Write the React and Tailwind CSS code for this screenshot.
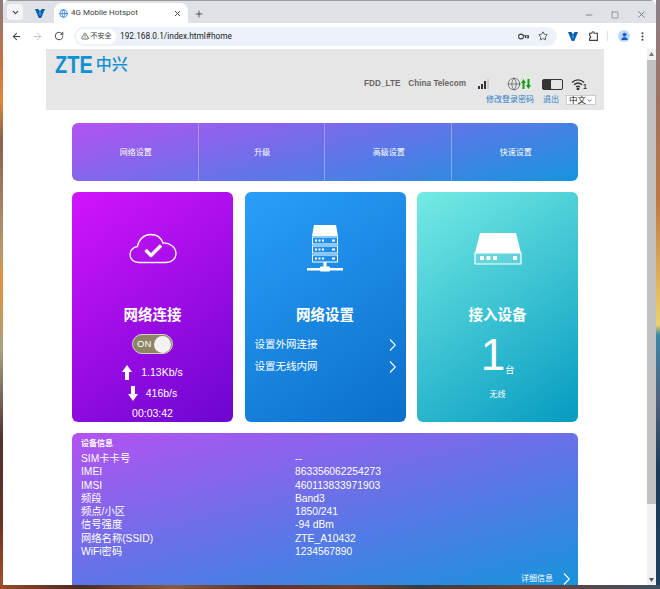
import {
  ArrowLeft,
  ArrowRight,
  ChevronDown,
  EllipsisVertical,
  Globe,
  Minus,
  Plus,
  RotateCw,
  Square,
  Star,
  TriangleAlert,
  User,
  X,
} from "lucide-react";

const sans = "font-['Liberation_Sans','Noto_Sans_CJK_SC',sans-serif]";

const VLogo = () => (
  <svg width="10" height="9" viewBox="0 0 10 9">
    <path d="M0 0h3.400L5 2.500 6.600 0H10L6.200 9H3.800z" fill="#0b5cad" />
    <path d="M3.800 4 5 2.500 6.200 4 5 7.500z" fill="#2aa3e8" />
  </svg>
);

const KeyIcon = () => (
  <svg width="11" height="7" viewBox="0 0 11 7" fill="none" stroke="#3c4043" strokeWidth="1.100">
    <circle cx="3" cy="3.500" r="2.400" />
    <path d="M5.400 2.800h5.100v2H9.200V3.800M7.500 3v2" />
  </svg>
);

const PuzzleIcon = () => (
  <svg width="9" height="10" viewBox="0 0 9 10" fill="none" stroke="#3c4043" strokeWidth="1.100">
    <path d="M.6 2.200h2.200c0-2 2.400-2 2.400 0h3.200v7.200H.6V7c1.600 0 1.600-2.200 0-2.200z" />
  </svg>
);

const CloudCheck = () => (
  <svg width="48" height="31" viewBox="0 0 48 31" fill="none">
    <path
      d="M10 29.500C4.500 29.500 1 26 1 21.500 1 17.500 4 14 8.500 13.500 9.500 7 14.500 1.500 22 1.500c5.500 0 10 3 12 8.500 6.500-.5 13 4.500 13 10.500 0 5.500-4.500 9-10 9z"
      stroke="#fff"
      strokeWidth="1.300"
    />
    <path d="M16.500 17l5.500 5.500 10-10" stroke="#fff" strokeWidth="3.400" strokeLinejoin="round" />
  </svg>
);

const ServerIcon = () => (
  <svg width="36" height="48" viewBox="0 0 36 48" fill="none">
    <path d="M7 0h22l2 11H5z" fill="#fff" />
    {[11, 20, 29].map((y) => (
      <g key={y}>
        <rect x="5.500" y={y + 1} width="25" height="7" stroke="#fff" strokeWidth="1" />
        <rect x="8" y={y + 3.500} width="2" height="2" fill="#fff" />
        <rect x="11.500" y={y + 3.500} width="2" height="2" fill="#fff" />
        <rect x="15" y={y + 3.500} width="2" height="2" fill="#fff" />
        <rect x="25" y={y + 3.500} width="3" height="2" fill="#fff" />
      </g>
    ))}
    <rect x="16.500" y="37" width="3" height="8" fill="#fff" />
    <rect x="0" y="43" width="36" height="2.500" fill="#fff" />
    <rect x="13" y="41.500" width="10" height="5" rx="1" fill="#fff" />
  </svg>
);

const RouterIcon = () => (
  <svg width="48" height="33" viewBox="0 0 48 33" fill="none">
    <path d="M6 1h36l5 20H1z" fill="#fff" />
    <path d="M1 21h46v11H1z" fill="#fff" fillOpacity="0.12" stroke="#fff" strokeWidth="1.200" />
    <rect x="6" y="24" width="4" height="4" fill="#fff" />
    <rect x="12.500" y="24" width="4" height="4" fill="#fff" />
    <rect x="19" y="24" width="4" height="4" fill="#fff" />
    <rect x="39" y="24" width="4" height="4" fill="#fff" />
  </svg>
);

const ThinArrow = () => (
  <svg width="7" height="12" viewBox="0 0 7 12" fill="none" stroke="#fff" strokeWidth="1.100">
    <path d="M1 .5 6.300 6 1 11.500" />
  </svg>
);

const FatArrow = ({ down }) => (
  <svg width="10" height="15" viewBox="0 0 10 15" className={down ? "rotate-180" : ""}>
    <path d="M5 0l5 7H7v8H3V7H0z" fill="#fff" />
  </svg>
);

const menu = ["网络设置", "升级", "高级设置", "快速设置"];

const info = [
  ["SIM卡卡号", "--"],
  ["IMEI", "863356062254273"],
  ["IMSI", "460113833971903"],
  ["频段", "Band3"],
  ["频点/小区", "1850/241"],
  ["信号强度", "-94 dBm"],
  ["网络名称(SSID)", "ZTE_A10432"],
  ["WiFi密码", "1234567890"],
];

const Browser = () => (
  <div className="shrink-0 font-['Roboto','Noto_Sans_CJK_SC',sans-serif] text-[#3c4043]">
    <div className="flex h-[23px] items-end border-t border-[#9a9a9a] bg-[#dee1e6] pl-1">
      <div className="mb-[3px] flex h-4 w-4 items-center justify-center rounded bg-[#f4f5f7]">
        <ChevronDown size={9} strokeWidth={3} />
      </div>
      <div className="mb-[5px] ml-[10px] flex w-[14px] justify-center">
        <VLogo />
      </div>
      <div className="ml-[7px] flex h-5 w-[134px] items-center rounded-t-lg bg-white pl-[5px] pr-[6px]">
        <Globe size={9} className="text-[#1a73e8]" />
        <span className="ml-[3px] flex-1 text-[8px]">4G Mobile Hotspot</span>
        <X size={9} strokeWidth={2.500} />
      </div>
      <Plus size={10} className="mb-1 ml-[6px]" />
      <div className="mb-[3px] ml-auto flex items-center gap-[17px] pr-[9px] text-[#70757a]">
        <Minus size={10} />
        <Square size={8} />
        <X size={11} />
      </div>
    </div>
    <div className="flex h-[26px] items-center bg-white pl-[8px] pr-[8px]">
      <ArrowLeft size={11} strokeWidth={2.200} />
      <ArrowRight size={11} strokeWidth={1.600} className="ml-[10px] text-[#a9acb0]" />
      <RotateCw size={10} strokeWidth={2.200} className="ml-[11px]" />
      <div className="ml-[10px] flex h-[19px] w-[483px] items-center rounded-full bg-[#edf2fa] pl-[2px] pr-[9px]">
        <div className="flex h-[15px] w-[40px] items-center justify-center gap-[2px] rounded-full bg-white text-[7px]">
          <TriangleAlert size={8} strokeWidth={2.200} />
          不安全
        </div>
        <span className="ml-[4px] flex-1 text-[8.300px] text-[#202124]">192.168.0.1/index.html#home</span>
        <KeyIcon />
        <Star size={10} strokeWidth={2} className="ml-[9px]" />
      </div>
      <div className="ml-[10px] flex w-[12px] justify-center">
        <VLogo />
      </div>
      <div className="ml-[9px] flex w-[10px] justify-center">
        <PuzzleIcon />
      </div>
      <div className="ml-[9px] h-[10px] w-px bg-[#d3e3fd]" />
      <div className="ml-[10px] flex h-[12px] w-[12px] items-center justify-center rounded-full bg-[#c2d7f7]">
        <User size={9} fill="#0b57d0" className="text-[#0b57d0]" />
      </div>
      <EllipsisVertical size={11} strokeWidth={2.500} className="ml-[7px]" />
    </div>
  </div>
);

const Header = () => (
  <div className={`ml-[43px] flex h-[61px] w-[558px] justify-between bg-[#e6e6e6] pl-[9px] pr-[8px] ${sans}`}>
    <div className="mt-[3px] flex h-[26px] items-center text-[20px] leading-none font-semibold text-[#0f90d2]">
      <span className="inline-block scale-y-[1.2]">ZTE</span>
      <span className="ml-[3px] text-[16px] font-medium">中兴</span>
    </div>
    <div className="flex flex-col items-end justify-end pb-[4px]">
      <div className="mb-[3px] flex h-[14px] items-center">
        <span className="text-[8.200px] font-bold text-[#666]">FDD_LTE</span>
        <span className="ml-2 text-[8.200px] font-bold text-[#666]">China Telecom</span>
        <div className="ml-[12px] flex items-end gap-[1px]">
          <div className="h-[3px] w-[2px] bg-[#333]" />
          <div className="h-[5px] w-[2px] bg-[#333]" />
          <div className="h-[8px] w-[2px] bg-[#333]" />
          <div className="h-[10px] w-[2px] bg-[#ccc]" />
        </div>
        <Globe size={14} strokeWidth={1.200} className="ml-[18px] text-[#555]" />
        <svg width="10" height="10" viewBox="0 0 10 10">
          <path d="M2.500 0l2.500 4H3.500v6h-2V4H0zM7.500 10L5 6h1.500V0h2v6H10z" fill="#12a012" />
        </svg>
        <div className="ml-[11px] flex h-[11px] w-[21px] rounded-[2px] border border-[#333] bg-[#333]">
          <div className="ml-auto h-full w-[11px] rounded-[1px] bg-[#e6e6e6]" />
        </div>
        <div className="relative ml-[8px] w-[16px]">
          <svg width="14" height="12" viewBox="0 0 14 12" fill="none" stroke="#333" strokeWidth="1.300">
            <path d="M1 4.500C4.500 1 9.500 1 13 4.500M3 6.800c2.500-2.200 5.500-2.200 8 0M5 9c1.200-1 2.800-1 4 0" />
            <circle cx="7" cy="11" r="0.800" fill="#333" />
          </svg>
          <span className="absolute right-0 bottom-[-2px] text-[7px] font-bold text-[#333]">1</span>
        </div>
        <div className="w-[9px]" />
      </div>
      <div className="flex h-[12px] items-center text-[8px] text-[#2f80c8]">
        <span>修改登录密码</span>
        <span className="ml-[9px]">退出</span>
        <div className="ml-[7px] flex h-[10px] w-[30px] items-center justify-between border border-[#ccc] bg-white px-[2px] text-[8.500px] text-[#222]">
          中文
          <ChevronDown size={7} strokeWidth={2} />
        </div>
      </div>
    </div>
  </div>
);

const Card = ({ gradient, icon, title, children }) => (
  <div className={`flex h-[230px] w-[161px] flex-col items-center rounded-md text-white ${gradient}`}>
    <div className="flex h-[113px] items-center">{icon}</div>
    <div className="text-[14.500px] leading-5 font-bold">{title}</div>
    {children}
  </div>
);

const App = () => (
  <div className="h-[589px] w-[660px] overflow-hidden">
    <div className="flex h-[585px]">
      <div className="w-[3px] bg-[linear-gradient(180deg,#8a7a80_0,#c87040_60px,#e08838_100px,#8a6050_140px,#b89870_250px,#e09040_280px,#a8a080_350px,#503030_440px,#6a3020_520px,#a05030_585px)]" />
      <div className="flex w-[653px] flex-col overflow-hidden rounded-t-md rounded-b-sm bg-white">
        <Browser />
        <div className={`flex min-h-0 flex-1 ${sans}`}>
          <div className="w-[644px] min-w-0">
            <Header />
            <div className="mt-[13px] ml-[69px] grid h-[58px] w-[506px] grid-cols-4 rounded-md bg-[linear-gradient(165deg,#b452f2,#1695de)] text-[8px] text-white">
              {menu.map((m, i) => (
                <div key={m} className={`flex items-center justify-center pt-[1px] pl-[2px] ${i < 3 ? "border-r border-white/30" : ""}`}>
                  {m}
                </div>
              ))}
            </div>
            <div className="mt-[11px] ml-[69px] flex w-[506px] justify-between">
              <Card
                gradient="bg-[linear-gradient(145deg,#d214fd,#6b06cf)]"
                icon={<CloudCheck />}
                title="网络连接"
              >
                <div className="mt-[9px] flex h-5 w-[41px] items-center justify-between rounded-full border border-[#d8d0c0] bg-[#8c8465] pl-[4px] pr-[1px] text-[9.500px]">
                  ON
                  <div className="h-[17px] w-[17px] rounded-full bg-[#f2f2f2]" />
                </div>
                <div className="mt-[11px] flex h-[15px] items-center gap-[9px] text-[10.500px]">
                  <FatArrow />
                  1.13Kb/s
                </div>
                <div className="mt-[6px] flex h-[15px] items-center gap-[8px] text-[10.500px]">
                  <FatArrow down />
                  416b/s
                </div>
                <div className="mt-[5px] text-[10.500px] leading-[15px]">00:03:42</div>
              </Card>
              <Card
                gradient="bg-[linear-gradient(145deg,#2a9ff8,#0a6fcb)]"
                icon={<ServerIcon />}
                title="网络设置"
              >
                <div className="mt-[9px] flex h-[22px] w-full items-center justify-between pl-[10px] pr-[10px] text-[10.500px]">
                  设置外网连接
                  <ThinArrow />
                </div>
                <div className="flex h-[22px] w-full items-center justify-between pl-[10px] pr-[10px] text-[10.500px]">
                  设置无线内网
                  <ThinArrow />
                </div>
              </Card>
              <Card
                gradient="bg-[linear-gradient(145deg,#74ebe4,#069bc1)]"
                icon={<RouterIcon />}
                title="接入设备"
              >
                <div className="mt-[6px] flex h-[48px] items-end">
                  <span className="text-[44px] leading-[48px]">1</span>
                  <span className="mb-[2px] text-[9px]">台</span>
                </div>
                <div className="mt-[10px] text-[8px]">无线</div>
              </Card>
            </div>
            <div className="mt-[11px] ml-[69px] flex h-[160px] w-[506px] flex-col rounded-md bg-[linear-gradient(165deg,#b452f2,#1295dc)] pl-[9px] text-white">
              <div className="mt-[5px] h-[11px] text-[8px] leading-[11px] font-bold">设备信息</div>
              <div className="mt-[3px]">
                {info.map(([k, v]) => (
                  <div key={k} className="flex h-[13.300px] items-center text-[10.300px]">
                    <span className="w-[214px]">{k}</span>
                    <span>{v}</span>
                  </div>
                ))}
              </div>
              <div className="mt-[15px] flex items-center justify-end gap-[10px] pr-[8px] text-[8px]">
                详细信息
                <ThinArrow />
              </div>
            </div>
          </div>
          <div className="flex w-[9px] flex-col items-center bg-[#f1f1f1]">
            <svg width="5" height="11" viewBox="0 0 5 11">
              <path d="M2.500 3 5 7H0z" fill="#777" />
            </svg>
            <div className="h-[444px] w-full bg-[#c1c1c1]" />
            <div className="flex-1" />
            <svg width="5" height="11" viewBox="0 0 5 11">
              <path d="M2.500 8 5 4H0z" fill="#555" />
            </svg>
          </div>
        </div>
      </div>
      <div className="w-[4px] bg-[linear-gradient(180deg,#8a8088_0,#a07060_100px,#c07840_200px,#e8c060_300px,#e8d070_325px,#3a88a8_335px,#506080_400px,#1a3a58_470px,#204060_585px)]" />
    </div>
    <div className="h-[4px] bg-[linear-gradient(90deg,#9a4a28,#4a2a25_80px,#8a5a40_170px,#5a3030_260px,#704030_350px,#3a3a40_420px,#6a4038_520px,#405060_660px)]" />
  </div>
);

export default App;
